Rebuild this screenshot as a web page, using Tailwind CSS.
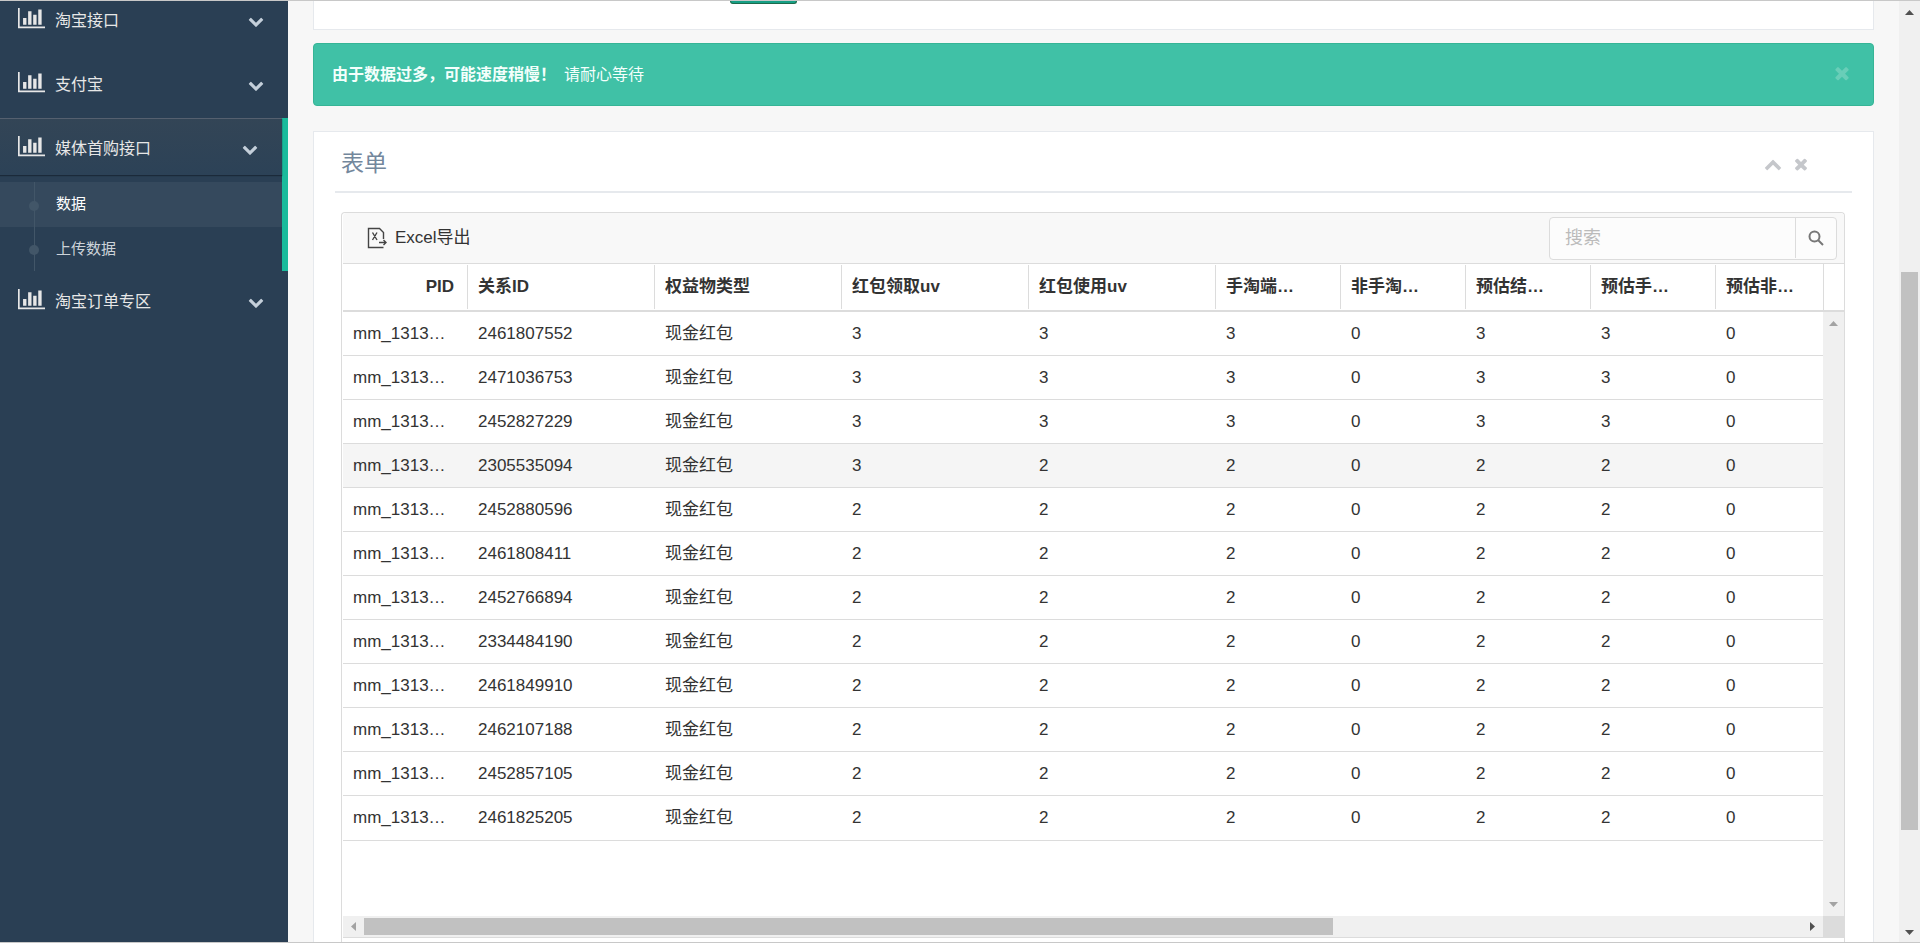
<!DOCTYPE html>
<html lang="zh-CN">
<head>
<meta charset="utf-8">
<title>数据</title>
<script src="https://cdn.jsdelivr.net/npm/@tailwindcss/browser@4"></script>
</head>
<body class="flex h-screen overflow-hidden border-y border-[#c8c8c8] bg-[#f7f7f7] font-['Liberation_Sans','Noto_Sans_CJK_SC',sans-serif] text-base text-[#333]">
<svg class="hidden">
  <symbol id="chart" viewBox="0 0 2048 1792"><path d="M640 896v512H384V896h256zm384-512v1024H768V384h256zm1024 1152v128H0V128h128v1408h1920zm-640-896v768h-256V640h256zm384-384v1152h-256V256h256z"/></symbol>
  <symbol id="down" viewBox="0 0 1792 1792"><path d="M1683 808l-742 741q-19 19-45 19t-45-19L109 808q-19-19-19-45.500T109 718l166-165q19-19 45-19t45 19l531 531 531-531q19-19 45-19t45 19l166 165q19 19 19 45.500t-19 45.500z"/></symbol>
  <symbol id="up" viewBox="0 0 1792 1792"><path d="M1683 1331l-166 165q-19 19-45 19t-45-19L896 965l-531 531q-19 19-45 19t-45-19l-166-165q-19-19-19-45.500t19-45.500l742-741q19-19 45-19t45 19l742 741q19 19 19 45.500t-19 45.500z"/></symbol>
  <symbol id="times" viewBox="0 0 1792 1792"><path d="M1490 1322q0 40-28 68l-136 136q-28 28-68 28t-68-28l-294-294-294 294q-28 28-68 28t-68-28l-136-136q-28-28-28-68t28-68l294-294-294-294q-28-28-28-68t28-68l136-136q28-28 68-28t68 28l294 294 294-294q28-28 68-28t68 28l136 136q28 28 28 68t-28 68l-294 294 294 294q28 28 28 68z"/></symbol>
</svg>

<nav class="w-72 shrink-0 overflow-hidden bg-[#2A3F54] text-[#E7E7E7]">
  <ul class="-mt-[11px]">
    <li class="mb-[7px]">
      <a href="#" class="flex h-[57px] items-center gap-[10px] pr-6 pl-[18px]">
        <svg class="mb-[2px] h-6 w-[27px] fill-current"><use href="#chart"/></svg>
        <span class="flex-1 pt-[5px]">淘宝接口</span>
        <svg class="mt-1 size-4 fill-[#C4CFDA]"><use href="#down"/></svg>
      </a>
    </li>
    <li class="mb-[7px]">
      <a href="#" class="flex h-[57px] items-center gap-[10px] pr-6 pl-[18px]">
        <svg class="mb-[2px] h-6 w-[27px] fill-current"><use href="#chart"/></svg>
        <span class="flex-1 pt-[5px]">支付宝</span>
        <svg class="mt-1 size-4 fill-[#C4CFDA]"><use href="#down"/></svg>
      </a>
    </li>
    <li class="border-r-6 border-[#1ABB9C]">
      <a href="#" class="flex h-[57px] items-center gap-[10px] bg-linear-to-b from-[#334556] to-[#2C4257] pr-6 pl-[18px] shadow-[inset_0_1px_0_#55606f,0_1px_1px_#1b2a3a]">
        <svg class="mb-[2px] h-6 w-[27px] fill-current"><use href="#chart"/></svg>
        <span class="flex-1 pt-[5px]">媒体首购接口</span>
        <svg class="mt-1 size-4 fill-[#C4CFDA]"><use href="#down"/></svg>
      </a>
      <ul class="relative pt-[7px] text-[15px]">
        <li class="bg-[#35495D]"><a href="#" class="relative flex h-[45px] items-center pb-px pl-14 text-white"><span class="absolute top-[19px] left-[29px] size-[10px] rounded-full bg-[#425668]"></span>数据</a></li>
        <li><a href="#" class="relative flex h-11 items-center pl-14 text-[#cdd3d9]"><span class="absolute top-[18px] left-[29px] size-[10px] rounded-full bg-[#425668]"></span>上传数据</a></li>
        <li aria-hidden="true" class="absolute top-[7px] bottom-0 left-[34px] w-px bg-[#425668]"></li>
      </ul>
    </li>
    <li>
      <a href="#" class="flex h-[57px] items-center gap-[10px] pr-6 pl-[18px]">
        <svg class="mb-[2px] h-6 w-[27px] fill-current"><use href="#chart"/></svg>
        <span class="flex-1 pt-1">淘宝订单专区</span>
        <svg class="mt-1 size-4 fill-[#C4CFDA]"><use href="#down"/></svg>
      </a>
    </li>
  </ul>
</nav>

<main class="flex min-w-0 flex-1 flex-col px-[25px]">
  <section class="h-[29px] shrink-0 border border-t-0 border-[#E6E9ED] bg-white pl-[416px]">
    <button type="button" aria-label="提交" class="block h-[3px] w-[67px] rounded-b-sm border border-t-0 border-[#1d6b4c] bg-[#169F85]"></button>
  </section>

  <div role="alert" class="mt-[13px] flex h-[63px] shrink-0 items-center gap-2 rounded border border-[#36b596] bg-[#40C1A6] pr-[21px] pl-[18px] text-[#f4fffc]">
    <strong>由于数据过多，可能速度稍慢！</strong>
    <span class="flex-1">请耐心等待</span>
    <button type="button" aria-label="关闭" class="pb-1"><svg class="block size-5 fill-[#69ceb8]"><use href="#times"/></svg></button>
  </div>

  <section class="mt-[25px] flex min-h-0 flex-1 flex-col border border-b-0 border-[#E6E9ED] bg-white px-[21px]">
    <header class="flex h-[61px] shrink-0 items-center gap-[10px] border-b-2 border-[#E6E9ED] pr-[42px] pl-[6px]">
      <h2 class="flex-1 pt-1 text-[23px] text-[#73879C]">表单</h2>
      <button type="button" aria-label="折叠" class="pt-1"><svg class="block size-[18px] fill-[#C5C7CB]"><use href="#up"/></svg></button>
      <button type="button" aria-label="关闭" class="pt-1"><svg class="block size-[18px] fill-[#C5C7CB]"><use href="#times"/></svg></button>
    </header>

    <div class="mr-[7px] ml-[6px] mt-[19px] flex min-h-0 flex-1 flex-col rounded-t border border-b-0 border-[#dcdcdc] pl-px text-[17px]">
      <div class="flex h-[51px] shrink-0 items-center justify-between rounded-t border-b border-[#dcdcdc] bg-[#f8f8f8] pr-[7px] pl-[23px]">
        <button type="button" class="flex items-center gap-[7px]">
          <svg class="size-[22px]" viewBox="0 0 22 22" fill="none" stroke="#444" stroke-width="1.400"><path d="M17.500 20.500H2.500V1.500H13.500L17.500 5.500V12M6.500 5.500L11 13M11 5.500L6.500 13M13 15.500H20M17.500 13L20 15.500L17.500 18"/></svg>
          <span>Excel导出</span>
        </button>
        <div class="flex h-[43px] w-72 items-stretch rounded border border-[#dcdcdc] bg-[#fcfcfc]">
          <input type="text" aria-label="搜索" placeholder="搜索" class="min-w-0 flex-1 pl-[15px] text-[18px] outline-none placeholder:text-[#bbb]">
          <button type="button" aria-label="搜索" class="mb-px flex w-[41px] items-center justify-center border-l border-[#dcdcdc]">
            <svg class="size-4" viewBox="0 0 16 16" fill="none" stroke="#777" stroke-width="2"><circle cx="6.500" cy="6.500" r="5"/><path d="M10 10L15 15"/></svg>
          </button>
        </div>
      </div>

      <div class="flex min-h-0 flex-1">
        <div class="min-w-0 flex-1 overflow-hidden">
          <table class="w-[1498px] table-fixed border-separate border-spacing-0 text-left">
            <colgroup>
              <col class="w-[125px]"><col class="w-[187px]"><col class="w-[187px]"><col class="w-[187px]"><col class="w-[187px]"><col class="w-[125px]"><col class="w-[125px]"><col class="w-[125px]"><col class="w-[125px]"><col class="w-[125px]">
            </colgroup>
            <thead id="head"></thead>
            <tbody id="rows"></tbody>
          </table>
        </div>
        <div class="flex w-[21px] shrink-0 flex-col">
          <div class="h-12 shrink-0 border-b-2 border-l border-[#dcdcdc]"></div>
          <div class="flex flex-1 flex-col items-center justify-between bg-[#f0f0f0] py-[9px]">
            <svg class="h-[5px] w-[9px] fill-[#a3a3a3]" viewBox="0 0 9 5"><path d="M0 5L4.500 0L9 5z"/></svg>
            <svg class="h-[5px] w-[9px] fill-[#a3a3a3]" viewBox="0 0 9 5"><path d="M0 0L4.500 5L9 0z"/></svg>
          </div>
        </div>
      </div>
      <div class="mb-1 flex h-[22px] shrink-0 border-b border-[#dcdcdc]">
        <div class="flex flex-1 items-center bg-[#f0f0f0] pr-2 pl-2">
          <svg class="h-[9px] w-[5px] fill-[#a3a3a3]" viewBox="0 0 5 9"><path d="M5 0L0 4.500L5 9z"/></svg>
          <div class="ml-2 flex-1"><div class="h-[17px] w-[67%] bg-[#c1c1c1]"></div></div>
          <svg class="h-[9px] w-[5px] fill-[#505050]" viewBox="0 0 5 9"><path d="M0 0L5 4.500L0 9z"/></svg>
        </div>
        <div class="w-[21px] bg-[#dcdcdc]"></div>
      </div>
    </div>
  </section>
</main>

<div class="flex w-[21px] shrink-0 flex-col items-center bg-[#f0f0f0] pt-[9px] pb-[7px]">
  <svg class="h-[5px] w-[9px] shrink-0 fill-[#505050]" viewBox="0 0 9 5"><path d="M0 5L4.500 0L9 5z"/></svg>
  <div class="flex w-full flex-1 flex-col items-center pt-[7px]">
    <div class="grow-[250]"></div>
    <div class="w-[17px] grow-[558] bg-[#c1c1c1]"></div>
    <div class="grow-[100]"></div>
  </div>
  <svg class="h-[5px] w-[9px] shrink-0 fill-[#505050]" viewBox="0 0 9 5"><path d="M0 0L4.500 5L9 0z"/></svg>
</div>

<script>
  const heads = ['PID', '关系ID', '权益物类型', '红包领取uv', '红包使用uv', '手淘端…', '非手淘…', '预估结…', '预估手…', '预估非…'];
  const data = [
    ['2461807552', 3, 3, 3], ['2471036753', 3, 3, 3], ['2452827229', 3, 3, 3], ['2305535094', 3, 2, 2],
    ['2452880596', 2, 2, 2], ['2461808411', 2, 2, 2], ['2452766894', 2, 2, 2], ['2334484190', 2, 2, 2],
    ['2461849910', 2, 2, 2], ['2462107188', 2, 2, 2], ['2452857105', 2, 2, 2], ['2461825205', 2, 2, 2]
  ];
  document.getElementById('head').innerHTML = '<tr>' + heads.map((h, i) =>
    `<th scope="col" class="border-b-2 border-[#dcdcdc] p-0 font-bold"><div class="my-px flex h-11 items-center whitespace-nowrap pl-[10px] ${i === 0 ? 'justify-end pr-[13px]' : ''} ${i < 9 ? 'border-r border-[#dcdcdc]' : ''}">${h}</div></th>`).join('') + '</tr>';
  document.getElementById('rows').innerHTML = data.map((r, n) => {
    const cells = ['mm_1313…', r[0], '现金红包', r[1], r[2], r[3], 0, r[3], r[3], 0];
    return `<tr class="${n === 3 ? 'bg-[#f5f5f5]' : ''}">` + cells.map(c =>
      `<td class="${n === 11 ? 'h-[45px]' : 'h-11'} whitespace-nowrap border-b border-[#dcdcdc] py-0 pr-0 pl-[10px] leading-6">${c}</td>`).join('') + '</tr>';
  }).join('');
</script>
</body>
</html>
